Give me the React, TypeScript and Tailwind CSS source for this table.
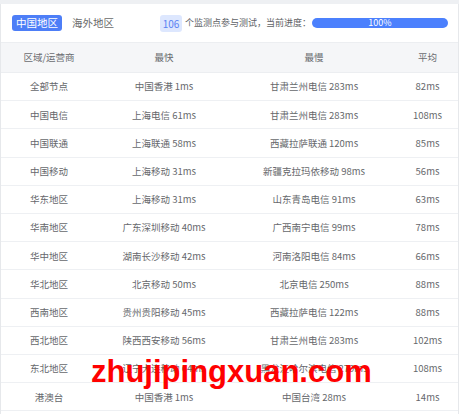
import React from "react";

interface Row {
  region: string;
  fast: string;
  slow: string;
  avg: string;
}

const rows: Row[] = [
  { region: "全部节点", fast: "中国香港 1ms", slow: "甘肃兰州电信 283ms", avg: "82ms" },
  { region: "中国电信", fast: "上海电信 61ms", slow: "甘肃兰州电信 283ms", avg: "108ms" },
  { region: "中国联通", fast: "上海联通 58ms", slow: "西藏拉萨联通 120ms", avg: "85ms" },
  { region: "中国移动", fast: "上海移动 31ms", slow: "新疆克拉玛依移动 98ms", avg: "56ms" },
  { region: "华东地区", fast: "上海移动 31ms", slow: "山东青岛电信 91ms", avg: "63ms" },
  { region: "华南地区", fast: "广东深圳移动 40ms", slow: "广西南宁电信 99ms", avg: "78ms" },
  { region: "华中地区", fast: "湖南长沙移动 42ms", slow: "河南洛阳电信 84ms", avg: "66ms" },
  { region: "华北地区", fast: "北京移动 50ms", slow: "北京电信 250ms", avg: "88ms" },
  { region: "西南地区", fast: "贵州贵阳移动 45ms", slow: "西藏拉萨电信 122ms", avg: "88ms" },
  { region: "西北地区", fast: "陕西西安移动 56ms", slow: "甘肃兰州电信 283ms", avg: "102ms" },
  { region: "东北地区", fast: "辽宁大连移动 64ms", slow: "黑龙江哈尔滨电信 279ms", avg: "108ms" },
  { region: "港澳台", fast: "中国香港 1ms", slow: "中国台湾 28ms", avg: "14ms" },
];

export default function App() {
  return (
    <div
      className="relative w-[459px] h-[414px] overflow-hidden bg-[#eef0f3] pt-[4px]"
      style={{ fontFamily: '"Noto Sans CJK SC", "Noto Sans", sans-serif' }}
    >
      <div className="bg-white border-x border-[#e6e8eb] h-full">
        <div className="h-[38px] flex items-center pl-[11px] pr-[10px] whitespace-nowrap">
          <div className="shrink-0 h-[16px] w-[50px] rounded-[3px] bg-[#4d7ef7] text-white text-[10.5px] leading-[16px] text-center">
            中国地区
          </div>
          <div className="shrink-0 ml-[10px] text-[10.5px] text-[#6a6a6a]">海外地区</div>
          <div className="shrink-0 ml-[46px] h-[17px] w-[22px] rounded-[3px] bg-[#dde7fe] text-[#5a83f2] text-[10px] leading-[17px] text-center">
            106
          </div>
          <div className="shrink-0 ml-[3px] text-[9px] text-[#606266]">个监测点参与测试，当前进度：</div>
          <div className="ml-auto shrink-0 h-[10px] w-[136px] rounded-full bg-[#4b80fd] text-white text-[9px] leading-[10px] text-center">
            100%
          </div>
        </div>
        <table className="w-full table-fixed border-collapse text-[9.5px] text-[#66686c]">
          <colgroup>
            <col className="w-[96px]" />
            <col className="w-[134px]" />
            <col className="w-[166px]" />
            <col />
          </colgroup>
          <thead>
            <tr className="h-[30px] bg-[#f5f6f8] border-y border-[#eceef1] text-[#6a6c70]">
              <th className="font-normal">区域/运营商</th>
              <th className="font-normal">最快</th>
              <th className="font-normal">最慢</th>
              <th className="font-normal">平均</th>
            </tr>
          </thead>
          <tbody>
            {rows.map((r) => (
              <tr key={r.region} className="h-[28.2px] border-b border-[#eef0f3]">
                <td className="text-center">{r.region}</td>
                <td className="text-center">{r.fast}</td>
                <td className="text-center">{r.slow}</td>
                <td className="text-center">{r.avg}</td>
              </tr>
            ))}
          </tbody>
        </table>
      </div>
      <div
        className="absolute left-[91px] top-[356px] text-[31px] leading-none font-bold text-[#ff0000] whitespace-nowrap"
        style={{ fontFamily: '"Liberation Sans", Arial, sans-serif' }}
      >
        zhujipingxuan.com
      </div>
    </div>
  );
}
